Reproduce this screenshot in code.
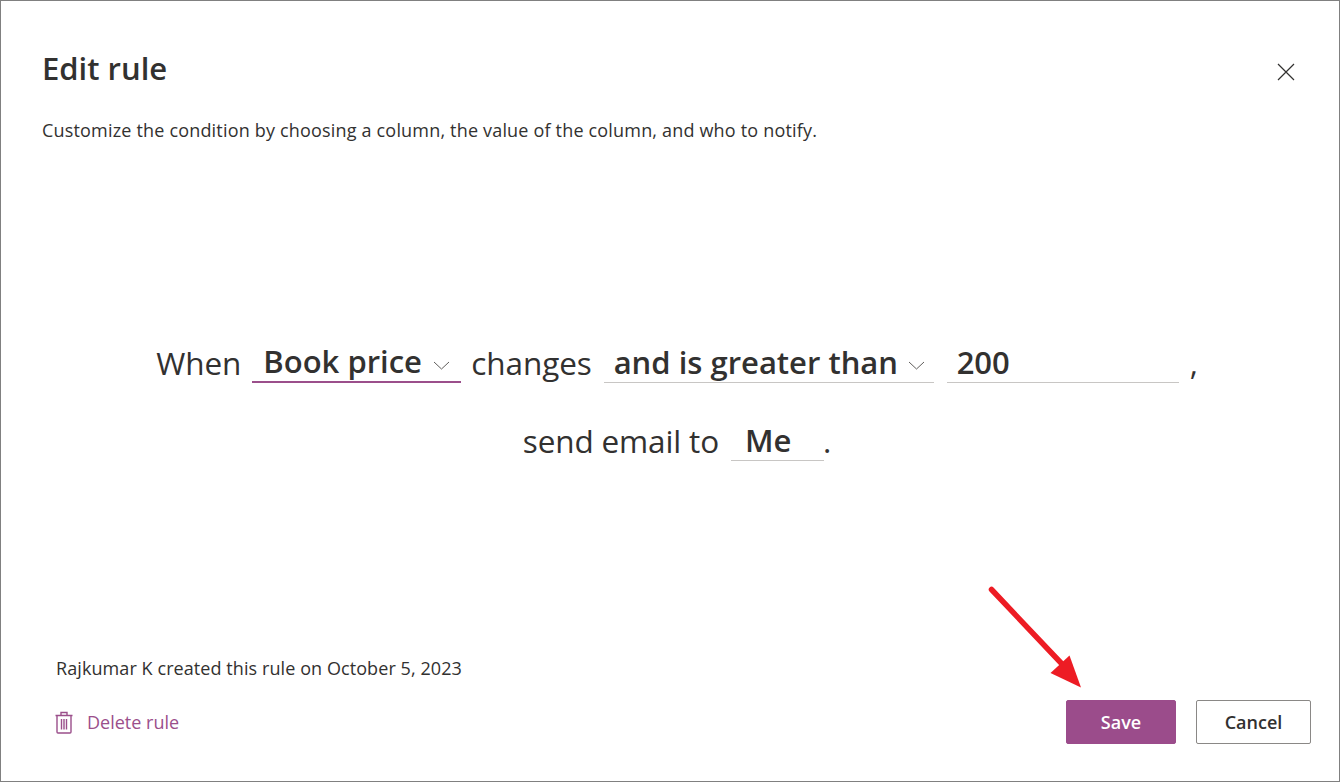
<template>
  <div class="dialog">
    <header class="head">
      <h1 class="title">Edit rule</h1>
      <button class="close" aria-label="Close">
        <svg width="18" height="18" viewBox="0 0 18 18"><path d="M1 1 L17 17 M17 1 L1 17" stroke="#323130" stroke-width="1.2" fill="none"/></svg>
      </button>
    </header>
    <p class="desc">Customize the condition by choosing a column, the value of the column, and who to notify.</p>

    <main class="sentence">
      <div class="line">
        <span class="word">When</span>
        <span class="field field-active w-col">
          <b>Book price</b>
          <svg class="chev" width="17" height="9" viewBox="0 0 17 9"><path d="M1 1 L8.5 8 L16 1" stroke="#605e5c" fill="none"/></svg>
        </span>
        <span class="word">changes</span>
        <span class="field w-op">
          <b>and is greater than</b>
          <svg class="chev" width="17" height="9" viewBox="0 0 17 9"><path d="M1 1 L8.5 8 L16 1" stroke="#605e5c" fill="none"/></svg>
        </span>
        <span class="field w-val"><b>200</b></span>
        <span class="word comma">,</span>
      </div>
      <div class="line">
        <span class="word tight">send email to</span>
        <span class="field w-me"><b>Me</b></span>
        <span class="word dot">.</span>
      </div>
    </main>

    <footer class="foot">
      <div class="meta">
        <p class="created">Rajkumar K created this rule on October 5, 2023</p>
        <a class="delete">
          <svg width="18" height="23" viewBox="0 0 18 23" fill="none" stroke="#9b4f8b" stroke-width="1.4">
            <path d="M0.5 4.5 H17.5 M6 4.5 V1.5 H12 V4.5 M2 4.5 V21 Q2 22 3 22 H15 Q16 22 16 21 V4.5 M6.5 8 V18.5 M9 8 V18.5 M11.5 8 V18.5"/>
          </svg>
          <span>Delete rule</span>
        </a>
      </div>
      <div class="actions">
        <button class="btn primary">Save</button>
        <button class="btn">Cancel</button>
      </div>
    </footer>

    <svg class="arrow" width="1340" height="782" viewBox="0 0 1340 782">
      <path d="M991.5 589.5 L1062 664" stroke="#ed1c24" stroke-width="5.5" stroke-linecap="round" fill="none"/>
      <path d="M1081 687.5 L1050.5 673 L1069.5 655.5 Z" fill="#ed1c24"/>
    </svg>
  </div>
</template>

<style>
html, body { margin: 0; background: #fff; }
</style>

<style scoped>
.dialog {
  position: relative;
  box-sizing: border-box;
  width: 1340px;
  height: 782px;
  border: 1px solid #808080;
  background: #fff;
  display: flex;
  flex-direction: column;
  font-family: "Open Sans", "Noto Sans", sans-serif;
  color: #323130;
  overflow: hidden;
}
.head {
  display: flex;
  justify-content: space-between;
  align-items: center;
  padding: 45px 44px 0 41px;
  height: 44px;
}
.title { margin: 0; font-size: 31px; line-height: 40px; font-weight: 600; }
.close { border: 0; background: none; padding: 0; width: 18px; height: 18px; margin-top: 7px; }
.close svg { display: block; }
.desc { margin: 29px 0 0 41px; font-size: 18px; line-height: 22px; letter-spacing: 0.18px; }
.sentence { flex: 1; display: flex; flex-direction: column; align-items: center; padding-left: 14px; padding-top: 194px; gap: 30px; }
.line { display: flex; align-items: flex-end; height: 48px; }
.word { font-size: 31.5px; line-height: 40px; letter-spacing: -0.1px; }
.tight { letter-spacing: -0.15px; }
.field { display: flex; align-items: center; box-sizing: border-box; height: 40px; border-bottom: 1px solid #c8c6c4; padding: 0 0 2px 11px; margin: 0 12px; }
.field b { font-size: 31px; line-height: 36px; font-weight: 600; letter-spacing: 0; }
.field-active { border-bottom: 2px solid #9b4f8b; }
.chev { margin-left: 11px; margin-top: 8px; flex: none; }
.w-col { width: 209px; margin: 0 10px 0 11px; }
.w-op { width: 330px; padding-left: 10px; margin-right: 13px; }
.w-op .chev { margin-left: 10px; }
.w-val { width: 232px; margin: 0 11px 0 0; padding-left: 10px; }
.w-me { width: 93px; padding-left: 14px; margin-right: 0; }
.dot { margin-left: -1px; }
.foot { display: flex; justify-content: space-between; align-items: flex-end; padding: 0 28px 37px 55px; }
.created { margin: 0 0 30px; font-size: 18px; line-height: 24px; letter-spacing: 0.08px; }
.delete { display: flex; align-items: center; gap: 14px; margin-left: -1px; color: #9b4f8b; font-size: 18px; line-height: 24px; margin-bottom: 10px; }
.actions { display: flex; gap: 20px; }
.btn { box-sizing: border-box; width: 115px; height: 44px; border: 1px solid #8a8886; border-radius: 2px; background: #fff; color: #323130; font: 600 18px "Open Sans", sans-serif; padding: 0; }
.primary { width: 110px; background: #9b4c8b; border-color: #9b4c8b; color: #fff; }
.arrow { position: absolute; left: -1px; top: -1px; pointer-events: none; }
</style>
